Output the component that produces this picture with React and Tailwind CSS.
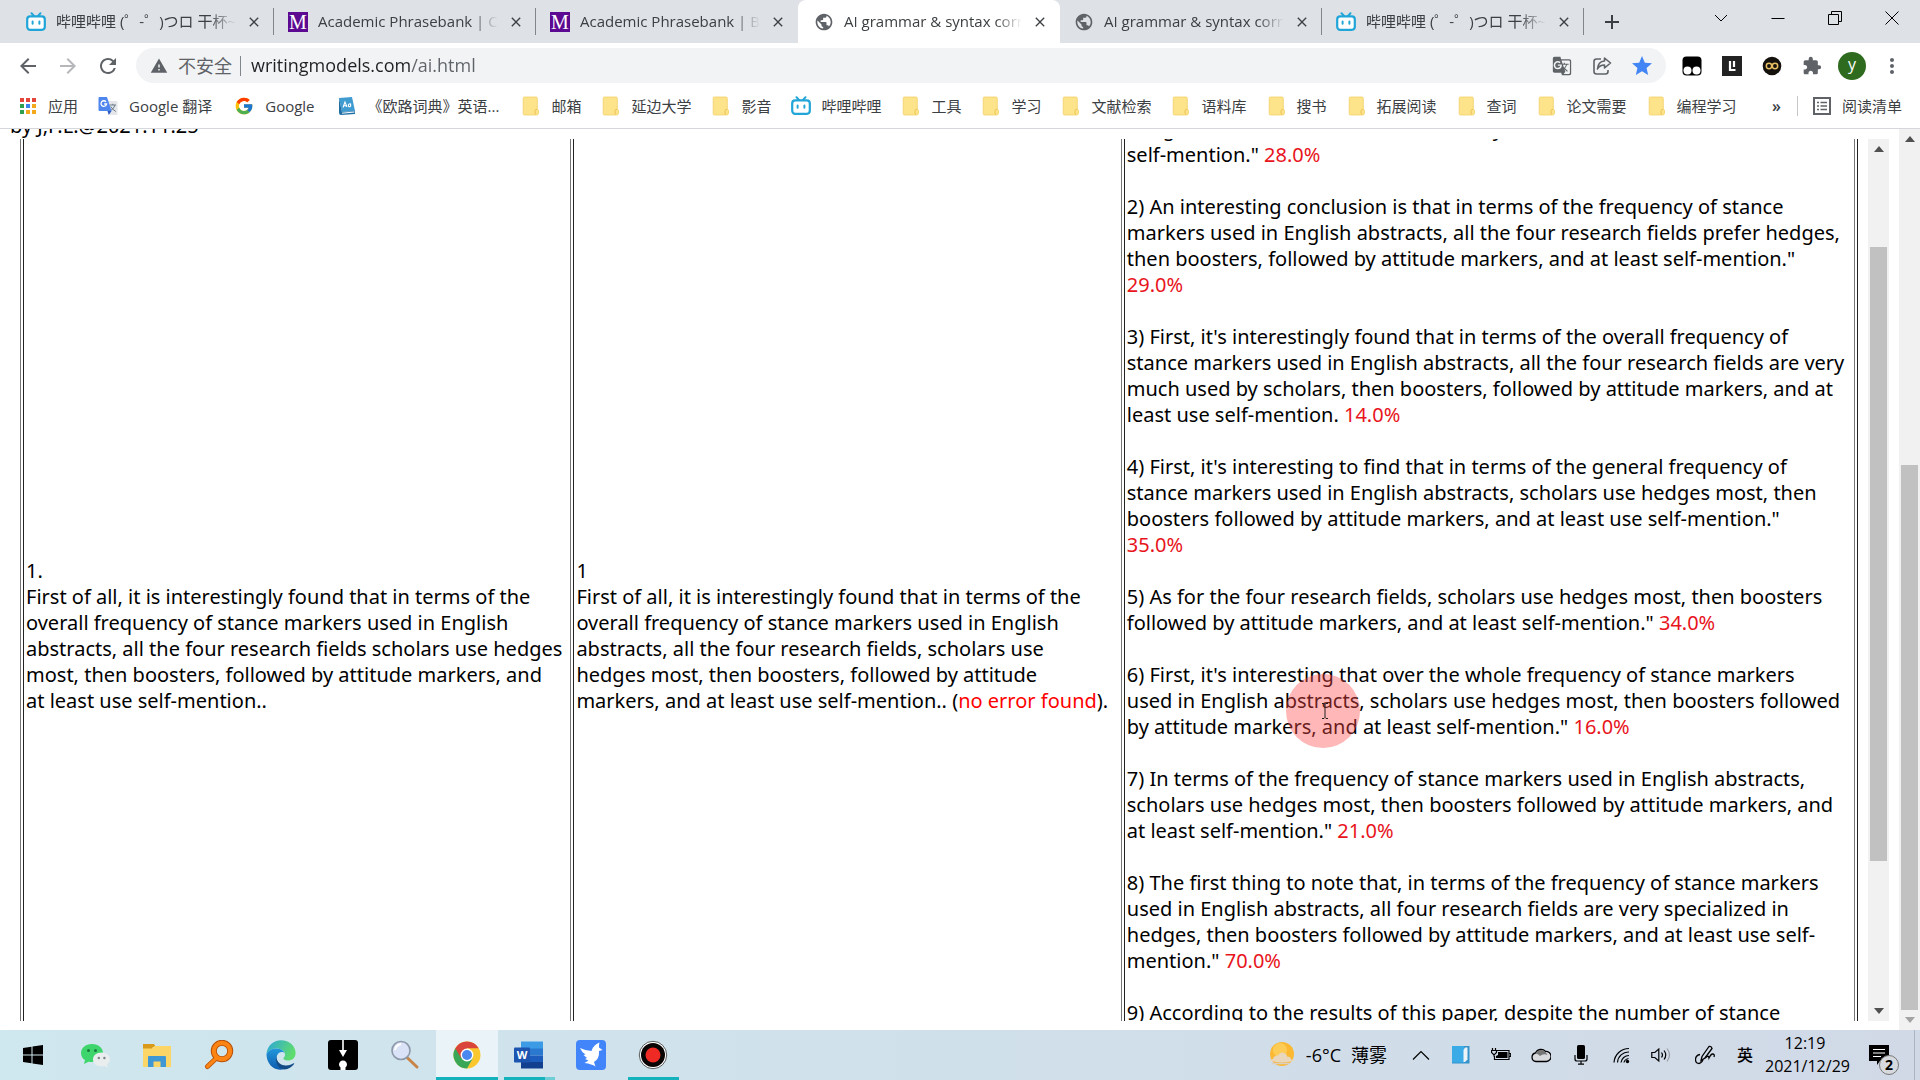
import React from 'react'
import {
    MdAdd,
    MdArrowBack,
    MdArrowForward,
    MdClose,
    MdExtension,
    MdGTranslate,
    MdMoreVert,
    MdPublic,
    MdRefresh,
    MdStar,
    MdWarning,
} from 'react-icons/md'
import { FcGoogle } from 'react-icons/fc'

const BiliIcon = () => (
    <svg viewBox="0 0 20 20" className="size-5" fill="none" stroke="#20a5d8" strokeLinecap="round">
        <path d="M5.5 1.2 8 4M14.5 1.2 12 4" strokeWidth="2" />
        <rect x="1.2" y="4.4" width="17.6" height="13.4" rx="3" strokeWidth="2.2" fill="#fff" />
        <path d="M6.6 9.6v2.2M13.4 9.6v2.2" strokeWidth="2" />
    </svg>
)

const PhrasebankIcon = () => (
    <span className="flex size-5 items-center justify-center bg-[#5b0a91] font-[Liberation_Serif,serif] text-xl leading-5 text-white">
        M
    </span>
)

const GlobeIcon = () => <MdPublic className="size-5 text-[#5f6368]" />

const FolderIcon = () => (
    <svg viewBox="0 0 20 20" className="size-5">
        <path d="M3.5 1h11.5q1.3 0 1.3 1.3V13l1.2 1.2V17q0 2-2 2h-12q-1.3 0-1.3-1.3V2.3Q2.200 1 3.500 1z" fill="#fde38a" stroke="#f3d06a" strokeWidth=".8" />
        <path d="M14.600 18.600q-1.500-3 0-5l1.800-.2" fill="none" stroke="#e9c04f" strokeWidth=".9" />
    </svg>
)

const AppsIcon = () => (
    <svg viewBox="0 0 20 20" className="size-5">
        <path d="M2 2h4v4H2zM8 2h4v4H8zM14 2h4v4h-4z" fill="#e5463c" />
        <path d="M2 8h4v4H2z" fill="#2f9e4f" />
        <path d="M8 8h4v4H8z" fill="#3b82ec" />
        <path d="M14 8h4v4h-4z" fill="#f2a91c" />
        <path d="M2 14h4v4H2z" fill="#2f9e4f" />
        <path d="M8 14h4v4H8zM14 14h4v4h-4z" fill="#f2a91c" />
    </svg>
)

const TranslateIcon = () => (
    <svg viewBox="0 0 20 20" className="size-5">
        <path d="M8 5h10.500q1 0 1 1v12q0 1-1 1H12z" fill="#e4e6ea" />
        <path d="M11.500 9h6.500M14.800 7.800V9M17 9q-1 4-5 6M12.800 10.500q1.500 3 5 5" stroke="#6b7c8c" fill="none" />
        <path d="M1.500 1H9l4.500 14h-12q-1 0-1-1V2q0-1 1-1z" fill="#4e86ee" />
        <path d="M9.500 15h4l-2.700 4z" fill="#2b56c0" />
        <path d="M8 5.800A2.800 2.800 0 1 0 8.600 8H6.200" stroke="#fff" strokeWidth="1.300" fill="none" />
    </svg>
)

const DictIcon = () => (
    <svg viewBox="0 0 20 20" className="size-5">
        <path d="M2 2 15 1l3 14-13 1z" fill="#3f9bd0" />
        <path d="M2 2v14.500q0 2.500 2 2.500l14-1v-3L5 16z" fill="#1f6fa5" />
        <path d="M5 17.200 17.500 16" stroke="#fff" />
        <path d="M6 11.500 8 6l2 5M6.700 9.700h2.600M13.600 10.500V8q-2.200-.5-2.200 1.500t2.200.8" stroke="#fff" fill="none" strokeWidth="1.100" />
    </svg>
)

const ListIcon = () => (
    <svg viewBox="0 0 20 20" className="size-5" fill="none" stroke="#5f6368" strokeWidth="2">
        <path d="M2 2h16v16H2z" />
        <path d="M5 6.500h2M5 10h2M5 13.500h2M8.500 6.500H15M8.500 10H15M8.500 13.500H15" strokeWidth="1.600" />
    </svg>
)

const ShareIcon = () => (
    <svg viewBox="0 0 20 20" className="size-5" fill="none" stroke="#5f6368" strokeWidth="1.600" strokeLinejoin="round">
        <path d="M9 3H4.500Q2 3 2 5.500v10Q2 18 4.500 18h9q2.500 0 2.500-2.500V14" />
        <path d="M12.500 2 18.500 7l-6 5V9Q7.500 9 5.500 13 6 5.500 12.500 5z" />
    </svg>
)

const tabs = [
    { title: '哔哩哔哩 (゜-゜)つロ 干杯~-bilibili', Icon: BiliIcon },
    { title: 'Academic Phrasebank | Compare', Icon: PhrasebankIcon },
    { title: 'Academic Phrasebank | Being', Icon: PhrasebankIcon },
    { title: 'AI grammar & syntax corrector', Icon: GlobeIcon, active: true },
    { title: 'AI grammar & syntax corrector', Icon: GlobeIcon },
    { title: '哔哩哔哩 (゜-゜)つロ 干杯~-bilibili', Icon: BiliIcon },
]

const bookmarks = [
    { label: '应用', Icon: AppsIcon },
    { label: 'Google 翻译', Icon: TranslateIcon, wide: true },
    { label: 'Google', Icon: () => <FcGoogle className="size-5" />, wide: true },
    { label: '《欧路词典》英语...', Icon: DictIcon, wide: true },
    { label: '邮箱', Icon: FolderIcon },
    { label: '延边大学', Icon: FolderIcon },
    { label: '影音', Icon: FolderIcon },
    { label: '哔哩哔哩', Icon: BiliIcon },
    { label: '工具', Icon: FolderIcon },
    { label: '学习', Icon: FolderIcon },
    { label: '文献检索', Icon: FolderIcon },
    { label: '语料库', Icon: FolderIcon },
    { label: '搜书', Icon: FolderIcon },
    { label: '拓展阅读', Icon: FolderIcon },
    { label: '查词', Icon: FolderIcon },
    { label: '论文需要', Icon: FolderIcon },
    { label: '编程学习', Icon: FolderIcon },
]

const original = [
    '1.',
    'First of all, it is interestingly found that in terms of the',
    'overall frequency of stance markers used in English',
    'abstracts, all the four research fields scholars use hedges',
    'most, then boosters, followed by attitude markers, and',
    'at least use self-mention..',
]

const checked = [
    '1',
    'First of all, it is interestingly found that in terms of the',
    'overall frequency of stance markers used in English',
    'abstracts, all the four research fields, scholars use',
    'hedges most, then boosters, followed by attitude',
]

const rewrites = [
    {
        lines: ['hedges most, then boosters followed by attitude markers, and at least', 'self-mention."'],
        score: '28.0%',
    },
    {
        lines: [
            '2) An interesting conclusion is that in terms of the frequency of stance',
            'markers used in English abstracts, all the four research fields prefer hedges,',
            'then boosters, followed by attitude markers, and at least self-mention."',
            '',
        ],
        score: '29.0%',
    },
    {
        lines: [
            "3) First, it's interestingly found that in terms of the overall frequency of",
            'stance markers used in English abstracts, all the four research fields are very',
            'much used by scholars, then boosters, followed by attitude markers, and at',
            'least use self-mention.',
        ],
        score: '14.0%',
    },
    {
        lines: [
            "4) First, it's interesting to find that in terms of the general frequency of",
            'stance markers used in English abstracts, scholars use hedges most, then',
            'boosters followed by attitude markers, and at least use self-mention."',
            '',
        ],
        score: '35.0%',
    },
    {
        lines: [
            '5) As for the four research fields, scholars use hedges most, then boosters',
            'followed by attitude markers, and at least self-mention."',
        ],
        score: '34.0%',
    },
    {
        lines: [
            "6) First, it's interesting that over the whole frequency of stance markers",
            'used in English abstracts, scholars use hedges most, then boosters followed',
            'by attitude markers, and at least self-mention."',
        ],
        score: '16.0%',
    },
    {
        lines: [
            '7) In terms of the frequency of stance markers used in English abstracts,',
            'scholars use hedges most, then boosters followed by attitude markers, and',
            'at least self-mention."',
        ],
        score: '21.0%',
    },
    {
        lines: [
            '8) The first thing to note that, in terms of the frequency of stance markers',
            'used in English abstracts, all four research fields are very specialized in',
            'hedges, then boosters followed by attitude markers, and at least use self-',
            'mention."',
        ],
        score: '70.0%',
    },
    { lines: ['9) According to the results of this paper, despite the number of stance'] },
]

const Tab = ({ title, Icon, active }) => (
    <div
        role="tab"
        aria-selected={!!active}
        className={
            active
                ? 'flex w-[262px] min-w-0 items-center rounded-t-lg bg-white pl-4 pr-2.5'
                : 'flex w-[262px] min-w-0 items-center pl-3.5 pr-2.5'
        }
    >
        <Icon />
        <span className="ml-2.5 min-w-0 flex-1 overflow-hidden whitespace-nowrap text-[15px] text-[#3c4043] [mask-image:linear-gradient(to_right,#000_85%,transparent)]">
            {title}
        </span>
        <button aria-label="Close tab" className="ml-2 flex size-5 items-center justify-center text-[#3c4043]">
            <MdClose className="size-4" />
        </button>
    </div>
)

const TabStrip = () => (
    <div className="flex h-[43px] bg-[#dee1e6] pl-3">
        <div role="tablist" className="flex min-w-0">
            {tabs.map((tab, i) => (
                <React.Fragment key={i}>
                    <Tab {...tab} />
                    <span className={i === 2 || i === 3 ? 'w-0' : '-ml-px my-2 w-px bg-[#80868b]'} />
                </React.Fragment>
            ))}
        </div>
        <button aria-label="New tab" className="flex w-14 items-center justify-center text-[#3c4043]">
            <MdAdd className="size-6" />
        </button>
        <div className="ml-auto flex h-9 text-black">
            <button aria-label="Search tabs" className="flex w-[57px] items-center justify-center">
                <svg viewBox="0 0 14 14" className="size-3.5" fill="none" stroke="currentColor">
                    <path d="m1 4 6 6 6-6" />
                </svg>
            </button>
            <button aria-label="Minimize" className="flex w-[57px] items-center justify-center">
                <svg viewBox="0 0 14 14" className="size-3.5" stroke="currentColor">
                    <path d="M.5 7.500h13" />
                </svg>
            </button>
            <button aria-label="Restore" className="flex w-[57px] items-center justify-center">
                <svg viewBox="0 0 14 14" className="size-3.5" fill="none" stroke="currentColor">
                    <path d="M.5 3.500h10v10H.5zM3.500 3.500v-3h10v10h-3" />
                </svg>
            </button>
            <button aria-label="Close" className="flex w-[57px] items-center justify-center">
                <svg viewBox="0 0 14 14" className="size-3.5" stroke="currentColor">
                    <path d="m.5.5 13 13m0-13-13 13" />
                </svg>
            </button>
        </div>
    </div>
)

const IconButton = ({ label, children }) => (
    <button aria-label={label} className="flex h-9 w-10 shrink-0 items-center justify-center text-[#5f6368]">
        {children}
    </button>
)

const Toolbar = () => (
    <div className="flex h-[45px] items-center px-2">
        <IconButton label="Back"><MdArrowBack className="size-6" /></IconButton>
        <IconButton label="Forward"><MdArrowForward className="size-6 text-[#b5b7ba]" /></IconButton>
        <IconButton label="Reload"><MdRefresh className="size-6" /></IconButton>

        <div className="ml-2 flex h-[35px] flex-1 items-center rounded-full bg-[#f1f3f4] pl-3.5 pr-1">
            <MdWarning className="size-[18px] text-[#5f6368]" />
            <label htmlFor="url" className="ml-2.5 text-lg text-[#5f6368]">不安全</label>
            <span className="ml-2 mr-2.5 h-5 w-px bg-[#80868b]" />
            <input
                id="url"
                defaultValue="writingmodels.com/ai.html"
                className="min-w-0 flex-1 bg-[linear-gradient(to_right,#202124_160px,#5f6368_160px)] bg-clip-text pb-0.5 text-lg text-transparent outline-none"
            />
            <IconButton label="Translate"><MdGTranslate className="size-5" /></IconButton>
            <IconButton label="Share"><ShareIcon /></IconButton>
            <IconButton label="Bookmark"><MdStar className="size-6 text-[#4285f4]" /></IconButton>
        </div>

        <div className="ml-1.5 flex">
            <IconButton label="Tampermonkey">
                <svg viewBox="0 0 20 20" className="size-5">
                    <rect x=".5" y=".5" width="19" height="19" rx="4" fill="#000" />
                    <circle cx="5.500" cy="14.500" r="4" fill="#fff" />
                    <circle cx="14.500" cy="14.500" r="4" fill="#fff" />
                </svg>
            </IconButton>
            <IconButton label="Library">
                <svg viewBox="0 0 20 20" className="size-5">
                    <path d="M0 0h20v20H0z" fill="#222" />
                    <path d="M8 5v9h5.500M12 5v6" stroke="#fff" strokeWidth="2.200" fill="none" />
                </svg>
            </IconButton>
            <IconButton label="Infinity">
                <svg viewBox="0 0 20 20" className="size-5" fill="none">
                    <circle cx="10" cy="10" r="9.300" fill="#15110d" />
                    <circle cx="7" cy="10" r="2.700" stroke="#e8bf62" strokeWidth="1.500" />
                    <circle cx="13" cy="10" r="2.700" stroke="#e8bf62" strokeWidth="1.500" />
                </svg>
            </IconButton>
            <IconButton label="Extensions"><MdExtension className="size-5" /></IconButton>
            <IconButton label="Profile">
                <span className="size-7 rounded-full bg-[#2f6b1f] text-center text-base leading-6 text-white">y</span>
            </IconButton>
            <IconButton label="Menu"><MdMoreVert className="size-6" /></IconButton>
        </div>
    </div>
)

const Bookmarks = () => (
    <nav className="flex h-[41px] items-center gap-5 overflow-hidden whitespace-nowrap border-b border-[#d5d7da] pb-1 pl-[18px] pr-[18px] text-[15px] text-[#3c4043]">
        {bookmarks.map(({ label, Icon, wide }) => (
            <a key={label} href="#" className={wide ? 'flex items-center gap-[11px] pr-0.5' : 'flex items-center gap-2.5'}>
                <Icon />
                {label}
            </a>
        ))}
        <button aria-label="More bookmarks" className="ml-auto mr-0.5 text-base font-semibold leading-5">»</button>
        <span className="-mx-1.5 h-5 w-px bg-[#c4c7ca]" />
        <button className="flex items-center gap-2.5">
            <ListIcon />
            阅读清单
        </button>
    </nav>
)

const Arrow = ({ down, muted }) => (
    <svg viewBox="0 0 10 6" className={muted ? 'h-1.5 w-2.5 text-[#a3a3a3]' : 'h-1.5 w-2.5 text-[#505050]'}>
        <path d={down ? 'M0 0h10L5 6z' : 'M0 6h10L5 0z'} fill="currentColor" />
    </svg>
)

const Lines = ({ lines }) => lines.map((line, i) => (
    <React.Fragment key={i}>
        {i > 0 && <br />}
        {line}
    </React.Fragment>
))

const cell = 'border border-l-[#222] border-r-[#777] border-y-[#777] px-0.5 py-px'

const Results = () => (
    <table className="-mt-7 h-[1050px] w-full table-fixed border-separate border-spacing-[2px] border border-l-[#777] border-r-[#222] border-y-[#777]">
        <tbody>
            <tr>
                <td className={`${cell} w-[30%] align-middle`}><Lines lines={original} /></td>
                <td className={`${cell} w-[30%] align-middle`}>
                    <Lines lines={checked} />
                    <br />
                    markers, and at least use self-mention.. (<span className="text-[#f00]">no error found</span>).
                </td>
                <td className={`${cell} align-top`}>
                    {rewrites.map(({ lines, score }, i) => (
                        <p key={i} className="mb-[26px]">
                            <Lines lines={lines} /> <span className="text-[#e8141c]">{score}</span>
                        </p>
                    ))}
                </td>
            </tr>
        </tbody>
    </table>
)

const Page = () => (
    <main className="flex min-h-0 flex-1">
        <div className="flex min-w-0 flex-1 flex-col font-[Noto_Sans,Noto_Sans_CJK_SC,sans-serif] text-xl leading-[26px] text-black">
            <div className="flex h-[10px] items-end overflow-hidden pl-2.5">by J,F.L.@2021.11.25</div>
            <div className="mb-[9px] ml-5 mr-2.5 flex min-h-0 flex-1 gap-2.5">
                <div className="min-w-0 flex-1 overflow-hidden whitespace-nowrap">
                    <Results />
                </div>
                <div className="flex w-[21px] flex-col items-stretch bg-[#f1f1f1] px-0.5">
                    <button aria-label="Scroll results up" className="flex h-5 items-center justify-center"><Arrow /></button>
                    <span className="grow-[88]" />
                    <span className="grow-[614] bg-[#c1c1c1]" />
                    <span className="grow-[140]" />
                    <button aria-label="Scroll results down" className="flex h-5 items-center justify-center"><Arrow down /></button>
                </div>
            </div>
        </div>
        <div className="flex w-[21px] flex-col items-stretch bg-[#f1f1f1] px-0.5">
            <button aria-label="Scroll page up" className="flex h-5 items-center justify-center"><Arrow /></button>
            <span className="grow-[316]" />
            <span className="grow-[545] bg-[#c1c1c1]" />
            <button aria-label="Scroll page down" className="flex h-5 items-center justify-center"><Arrow down muted /></button>
        </div>
    </main>
)

const apps = [
    {
        name: 'Start',
        icon: (
            <svg viewBox="0 0 22 22" className="size-[22px]">
                <path d="M1 4 9.500 2.700v7.800H1zM10.500 2.500 21 1v9.500H10.500zM1 11.500h8.500v7.800L1 18zM10.500 11.500H21V21l-10.500-1.500z" />
            </svg>
        ),
    },
    {
        name: 'WeChat',
        icon: (
            <svg viewBox="0 0 30 30" className="size-[30px]">
                <path d="M12 4C5.500 4 1 8 1 13q0 4.500 4 7l-1 4 4.500-2.300q12 2 14.500-8.700C23 8 18.500 4 12 4z" fill="#3ed56d" />
                <circle cx="8.500" cy="10.500" r="1.500" fill="#1c7a3d" />
                <circle cx="15.500" cy="10.500" r="1.500" fill="#1c7a3d" />
                <path d="M21.500 12.500c-5 0-8.500 3-8.500 7s3.500 7 8.500 7q1.500 0 3-.4L28 28l-1-3.500q3-2 3-5c0-4-3.500-7-8.500-7z" fill="#e9edee" />
                <circle cx="18.800" cy="18" r="1.200" fill="#7d8588" />
                <circle cx="24.400" cy="18" r="1.200" fill="#7d8588" />
            </svg>
        ),
    },
    {
        name: 'Explorer',
        icon: (
            <svg viewBox="0 0 30 30" className="size-[30px]">
                <path d="M1 4h11l2 3h-3L9 10H1z" fill="#d99a1c" />
                <path d="M1 8.500h9L12.500 6H29v21H1z" fill="#fbd667" />
                <path d="M6 27V17q0-1 1-1h16q1 0 1 1v10h-5.500v-5.500h-7V27z" fill="#3f97d3" />
            </svg>
        ),
    },
    {
        name: 'Everything',
        icon: (
            <svg viewBox="0 0 30 30" className="size-[30px]" fill="none" strokeLinecap="round">
                <circle cx="18" cy="11" r="8.200" stroke="#b54e06" strokeWidth="6" />
                <path d="M12.500 18 3.500 26.500" stroke="#b54e06" strokeWidth="5" />
                <circle cx="18" cy="11" r="8.200" stroke="#fb8414" strokeWidth="4.200" />
                <path d="M12.500 18 3.500 26.500" stroke="#fb8414" strokeWidth="3.400" />
            </svg>
        ),
    },
    {
        name: 'Edge',
        icon: (
            <svg viewBox="0 0 30 30" className="size-[30px]">
                <defs>
                    <linearGradient id="edgeTop" x1="0" x2="1" y1="0" y2=".4">
                        <stop offset="0" stopColor="#2aa5dc" />
                        <stop offset="1" stopColor="#5fdc6e" />
                    </linearGradient>
                    <linearGradient id="edgeSide" x1="0" x2="0" y1="0" y2="1">
                        <stop offset="0" stopColor="#2298dc" />
                        <stop offset="1" stopColor="#0d5cae" />
                    </linearGradient>
                </defs>
                <path d="M.5 14C1 6 7.500.3 15 .3c8.500 0 14.600 6 14.600 12.700 0 5-3.600 7.500-7.600 7.500-3.500 0-5-1.500-4.500-2.500 1-1 1.500-2 1.500-3.500C19 11 15 8.500 10.500 8.500 6 8.500 2 10.500.5 14z" fill="url(#edgeTop)" />
                <path d="M.5 14C2 10.500 6 8.500 10.500 8.500c4 0 7 1.800 8.200 4.500-1.500-1.500-6-2-7.700 2.500C9.500 20 12 27.500 19 28.800 9 32.500.3 24.500.5 14z" fill="url(#edgeSide)" />
                <path d="M11 15.500c-1.500 5.500 3 10 9 10 3.500 0 6-1.500 7.500-2.300.5-.2 1 .2.600.8C26 27 22.500 29.300 18.500 29.500 11 28.500 8.500 21 11 15.500z" fill="#134b86" />
            </svg>
        ),
    },
    {
        name: 'Downloader',
        icon: (
            <svg viewBox="0 0 30 30" className="size-[30px]">
                <rect width="30" height="30" rx="3" fill="#000" />
                <path d="M14.200 0h1.600v10H19l-4 7-4-7h3.200z" fill="#fff" />
                <path d="M12.500 30v-2.500a4 4 0 1 1 5 0V30z" fill="#fff" />
            </svg>
        ),
    },
    {
        name: 'Magnifier',
        icon: (
            <svg viewBox="0 0 30 30" className="size-[30px]">
                <path d="m16.500 17 10.500 10" stroke="#c98448" strokeWidth="3" strokeLinecap="round" />
                <circle cx="11" cy="10.500" r="9" fill="#d9e2f7" stroke="#8c97a8" strokeWidth="1.600" />
                <path d="M5 10q1-5 6-6" stroke="#fff" strokeWidth="2" fill="none" />
            </svg>
        ),
    },
    {
        name: 'Chrome',
        active: true,
        bar: 'w-full',
        icon: (
            <svg viewBox="0 0 30 30" className="size-[30px]">
                <circle cx="15" cy="15" r="13.500" fill="#fbc72f" />
                <path d="M15 15 3.300 8.250A13.500 13.500 0 0 0 15 28.500l5.600-9.700z" fill="#3aa757" />
                <path d="M3.300 8.250A13.500 13.500 0 0 1 26.700 8.250H15v6.750L9 18z" fill="#d9453a" />
                <circle cx="15" cy="15" r="6.400" fill="#fff" />
                <circle cx="15" cy="15" r="5" fill="#4a87ee" />
            </svg>
        ),
    },
    {
        name: 'Word',
        bar: 'w-[51px] border-r-[10px] border-[#6fcdd6]',
        icon: (
            <svg viewBox="0 0 30 30" className="size-[30px]">
                <path d="M7 1.500h22V9H7z" fill="#3d9be6" />
                <path d="M7 8.500h22v7H7z" fill="#2b78d0" />
                <path d="M7 15.500h22v7H7z" fill="#1b5cbd" />
                <path d="M7 22h22v6.500H7z" fill="#12408f" />
                <rect y="7.500" width="16" height="15" rx="1" fill="#1c54b0" />
                <text x="8" y="19" textAnchor="middle" fontSize="11" fontWeight="700" fill="#fff">W</text>
            </svg>
        ),
    },
    {
        name: 'Xunlei',
        icon: (
            <svg viewBox="0 0 30 30" className="size-[30px]">
                <rect width="30" height="30" rx="4" fill="#4285fa" />
                <path d="M4 8q5 2.500 11.500 3Q17 5 23.500 2.500q-.8 3-.5 5l3.500 2.500-3.500 1q.5 8-5 11l1.500 4.500q-3.500-2.500-11-3.500l4-2.500-3.500-1.500 2-1-3.500-3 2-.5Q5.500 12 4 8z" fill="#fff" />
            </svg>
        ),
    },
    {
        name: 'Recorder',
        bar: 'w-[51px]',
        icon: (
            <svg viewBox="0 0 30 30" className="size-[30px]">
                <circle cx="15" cy="15" r="13.700" fill="#fff" stroke="#333" strokeWidth=".8" />
                <circle cx="15" cy="15" r="12" fill="#0a0505" />
                <circle cx="15" cy="15" r="7.500" fill="#ef2a24" />
            </svg>
        ),
    },
]

const tray = [
    {
        name: 'Show hidden icons',
        icon: <path d="m2 14.500 8-8 8 8" />,
    },
    {
        name: 'Dictionary',
        icon: (
            <g stroke="none">
                <path d="M1 1h17.500v17.500H1z" fill="#3593c9" />
                <path d="M1 1h12v16.500H1z" fill="#3aabe6" />
                <path d="M12.500 5 14 2.500h2.500v12L14 17h-1.500z" fill="#edf4f8" />
            </g>
        ),
    },
    {
        name: 'Battery',
        icon: (
            <g>
                <path d="M5.500 5.500H18v9H3.500V11M18.500 8.500h1.200v3h-1.200" />
                <path d="M7 7h9.500v6H5v-2l2-1z" fill="#000" stroke="none" />
                <path d="M1.500 3v2M4.500 3v2M.5 5.500h5v2L3.500 9.500h-1L.5 7.500zM3 9.500v2" />
            </g>
        ),
    },
    {
        name: 'OneDrive',
        icon: (
            <g>
                <path d="M5 16.500A4.300 4.300 0 0 1 4.500 8 6 6 0 0 1 14.500 6.500 5 5 0 0 1 15.500 16.500z" fill="#d8dadd" strokeWidth="1.300" />
                <path d="M4.500 8.500A6 6 0 0 1 14.500 7l2 3q-4-2-7.500 1-2-2.500-4.500-2.500z" fill="#777" stroke="none" />
            </g>
        ),
    },
    {
        name: 'Microphone',
        icon: (
            <g>
                <rect x="6" y="0" width="8" height="14" rx="1.500" fill="#000" stroke="none" />
                <path d="M4 10v4q0 2 2 2h8q2 0 2-2v-4M10 16v3M7 19.200h6" />
            </g>
        ),
    },
    {
        name: 'Network',
        icon: (
            <g>
                <path d="M3 17.500A15 15 0 0 1 18 3.500M6.500 17.500A11 11 0 0 1 18 7M10 17.500A8 8 0 0 1 18 10.500" />
                <path d="M13 17.500q.5-3 4.500-4" />
                <circle cx="16.500" cy="16.500" r="1.700" fill="#000" stroke="none" />
            </g>
        ),
    },
    {
        name: 'Volume',
        icon: (
            <g>
                <path d="M.8 7.500h3l4-3.500v12l-4-3.500h-3z" />
                <path d="M10.500 7.500q2 2.500 0 5M13 5.500q3.500 4.500 0 9" />
                <path d="M16 3.500q5 6.500 0 13" stroke="#9a9fa8" />
            </g>
        ),
    },
]

const Taskbar = () => (
    <footer className="flex h-[50px] bg-linear-to-r from-[#cfe7ee] to-[#d1d9e7] pl-0.5 text-black">
        {apps.map(({ name, icon, active, bar }) => (
            <button
                key={name}
                aria-label={name}
                className={active ? 'flex w-[62px] flex-col items-center bg-[#eaf4f8]' : 'flex w-[62px] flex-col items-center'}
            >
                <span className="flex flex-1 items-center">{icon}</span>
                {bar ? <span className={`${bar} -mt-[3px] h-[3px] bg-[#13b2bc]`} /> : null}
            </button>
        ))}

        <div className="ml-auto flex items-center">
            <button className="flex items-center gap-2.5 text-lg">
                <svg viewBox="0 0 28 28" className="size-7">
                    <circle cx="14" cy="13" r="12" fill="#fbb832" />
                    <circle cx="12" cy="9" r="7" fill="#fdcc57" />
                    <path d="M5 18q1-4 5-3.500 2-4 6-2.500 3 1 3 3.500 4 0 4 3l5 .5-5 1.500q-9 2-17 0L0 19.500z" fill="#e8d6bd" />
                    <path d="M4 22.500h18" stroke="#d9cfc4" strokeWidth="1.500" />
                </svg>
                <span>-6°C</span>
                <span>薄雾</span>
            </button>
            <div className="ml-3.5 flex">
                {tray.map(({ name, icon }) => (
                    <button key={name} aria-label={name} className="flex w-10 justify-center">
                        <svg viewBox="0 0 20 20" className="size-5" fill="none" stroke="#000" strokeWidth="1.200">
                            {icon}
                        </svg>
                    </button>
                ))}
            </div>
            <button aria-label="Ink workspace" className="ml-1 flex w-10 justify-center">
                <svg viewBox="0 0 20 20" className="size-5" fill="none" stroke="#000" strokeWidth="1.300">
                    <path d="m6 15.500 1-4L14 1.500q2.500-.5 3 2L10 13z" />
                    <path d="M5 9.500q-4.500 1-4.500 5 0 4 3.500 4 2 0 4-3.500M10 13q3.500-3.500 4 0 2-4 3.500-4 2.500 0 1.500 3" />
                </svg>
            </button>
            <button className="flex w-10 justify-center text-base font-medium">英</button>
            <button className="w-20 text-center text-base leading-[23px]">
                12:19
                <br />
                2021/12/29
            </button>
            <button aria-label="Notifications" className="relative ml-6 mr-[25px]">
                <svg viewBox="0 0 20 20" className="size-5">
                    <path d="M0 0h20v16h-9l-3 4v-4H0z" />
                    <path d="M4 4.500h12M4 8h12M4 11.500h8" stroke="#fff" />
                </svg>
                <span className="absolute left-2.5 top-2.5 size-5 rounded-full border border-[#777] bg-[#d6d9dd] text-center text-sm font-bold leading-[18px]">
                    2
                </span>
            </button>
            <span className="h-full w-1.5 border-l border-[#a9b4c4]" />
        </div>
    </footer>
)

const App = () => {
    return (
        <div className="relative flex h-screen flex-col overflow-hidden bg-white font-[Open_Sans,Noto_Sans_CJK_SC,sans-serif]">
            <header>
                <TabStrip />
                <Toolbar />
                <Bookmarks />
            </header>
            <Page />
            <Taskbar />

            {/* click highlight with the text cursor in it */}
            <div className="pointer-events-none absolute left-[1286px] top-[674px] flex size-[74px] items-center justify-center rounded-full bg-[#ff4b4b]/40">
                <svg viewBox="0 0 8 16" className="ml-1 h-4 w-2" fill="none" stroke="#222">
                    <path d="M1 .5h2l1 1 1-1h2M4 1.500v13M1 15.500h2l1-1 1 1h2" />
                </svg>
            </div>
        </div>
    )
}

export default App
